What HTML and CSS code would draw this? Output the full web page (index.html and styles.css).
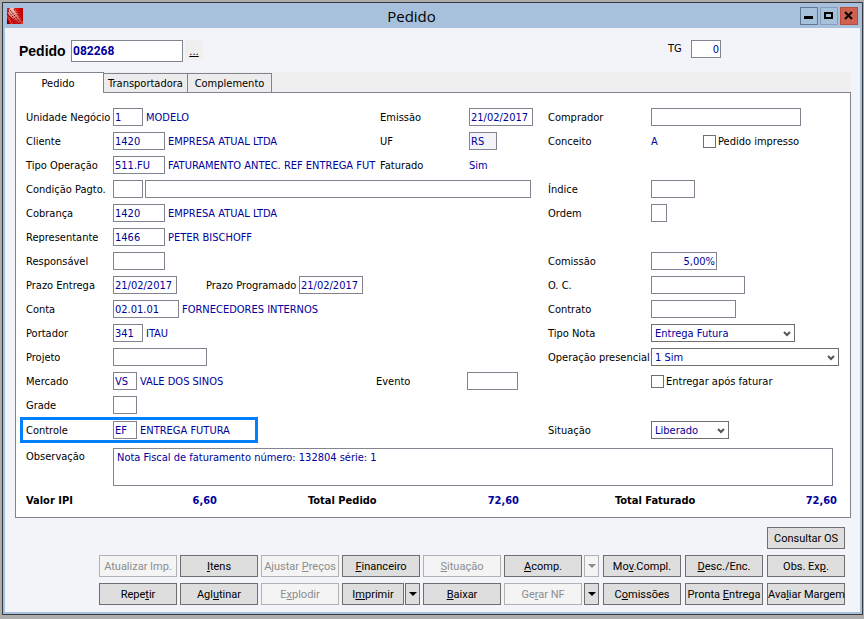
FILE: index.html
```html
<!DOCTYPE html>
<html lang="pt-BR">
<head>
    <meta charset="UTF-8">
    <meta name="viewport" content="width=device-width, initial-scale=1.0">
    <title>Pedido</title>
    <link rel="stylesheet" href="styles.css">
</head>
<body>
    <div class="window">
        <div class="titlebar">
            <svg class="logo" viewBox="0 0 16 16">
                <defs>
                    <linearGradient id="red" x1="0" y1="0" x2="1" y2="0">
                        <stop offset="0" stop-color="#c82020"/>
                        <stop offset="0.6" stop-color="#e60c0c"/>
                        <stop offset="1" stop-color="#b80000"/>
                    </linearGradient>
                    <linearGradient id="shine" x1="0" y1="0" x2="1" y2="1">
                        <stop offset="0" stop-color="#ffd8d0"/>
                        <stop offset="0.5" stop-color="#f08078"/>
                        <stop offset="1" stop-color="#e02020"/>
                    </linearGradient>
                </defs>
                <rect width="16" height="16" fill="url(#red)"/>
                <path d="M3 0h4l3 4 3 5 3 5v2h-3L8 12 3 8 1 5z" fill="url(#shine)"/>
                <path d="M0 6l4 4 4 6M1 3l5 6 6 7M3 2l5 6 6 8M7 1l4 6 4 6" stroke="#5c0808" stroke-dasharray="2 1" fill="none"/>
                <path d="M0 10l3 6H0z" fill="#6a0000"/>
                <path d="M1 9l4 7" stroke="#ff3028" fill="none"/>
            </svg>
            <h1>Pedido</h1>
            <button class="win-btn min" aria-label="Minimizar"><svg viewBox="0 0 16 16"><path d="M3 8h9v3H3z"/></svg></button>
            <button class="win-btn max" aria-label="Maximizar"><svg viewBox="0 0 16 16"><path d="M3 4h9v7H3zM5 6v3h5V6z" fill-rule="evenodd"/></svg></button>
            <button class="win-btn close" aria-label="Fechar"><svg viewBox="0 0 16 16"><path d="M4 4l7 7M11 4l-7 7" stroke="#000" stroke-width="2"/></svg></button>
        </div>

        <div class="content">
            <div class="top">
                <label for="pedido" class="pedido-label">Pedido</label>
                <input type="text" id="pedido" class="pedido-input" value="082268" autofocus>
                <button class="dots">...</button>
                <label for="tg" class="tg-label">TG</label>
                <input type="text" id="tg" class="w30 right" value="0">
            </div>

            <div class="tabs">
                <button class="tab active">Pedido</button>
                <button class="tab">Transportadora</button>
                <button class="tab">Complemento</button>
            </div>

            <div class="panel">
                <div class="row">
                    <div class="cell">
                        <label for="unidade">Unidade Negócio</label>
                        <input type="text" id="unidade" class="w30" value="1">
                        <span class="desc">MODELO</span>
                    </div>
                    <div class="cell mid">
                        <label for="emissao">Emissão</label>
                        <input type="text" id="emissao" class="w64" value="21/02/2017">
                    </div>
                    <div class="cell side">
                        <label for="comprador">Comprador</label>
                        <input type="text" id="comprador" class="w150">
                    </div>
                </div>

                <div class="row">
                    <div class="cell">
                        <label for="cliente">Cliente</label>
                        <input type="text" id="cliente" class="w52" value="1420">
                        <span class="desc">EMPRESA ATUAL LTDA</span>
                    </div>
                    <div class="cell mid">
                        <label for="uf">UF</label>
                        <input type="text" id="uf" class="w28 readonly" value="RS" readonly>
                    </div>
                    <div class="cell side">
                        <span class="name">Conceito</span>
                        <span class="value conceito">A</span>
                        <input type="checkbox" id="impresso">
                        <label for="impresso" class="check-label">Pedido impresso</label>
                    </div>
                </div>

                <div class="row">
                    <div class="cell">
                        <label for="tipoOperacao">Tipo Operação</label>
                        <input type="text" id="tipoOperacao" class="w52" value="511.FU">
                        <span class="desc">FATURAMENTO ANTEC. REF ENTREGA FUT</span>
                    </div>
                    <div class="cell mid">
                        <span class="name">Faturado</span>
                        <span class="value">Sim</span>
                    </div>
                </div>

                <div class="row">
                    <div class="cell wide">
                        <label for="condicao">Condição Pagto.</label>
                        <input type="text" id="condicao" class="w30">
                        <input type="text" class="condicao-desc" aria-label="Descrição da condição">
                    </div>
                    <div class="cell side">
                        <label for="indice">Índice</label>
                        <input type="text" id="indice" class="w44">
                    </div>
                </div>

                <div class="row">
                    <div class="cell wide">
                        <label for="cobranca">Cobrança</label>
                        <input type="text" id="cobranca" class="w52" value="1420">
                        <span class="desc">EMPRESA ATUAL LTDA</span>
                    </div>
                    <div class="cell side">
                        <label for="ordem">Ordem</label>
                        <input type="text" id="ordem" class="w16">
                    </div>
                </div>

                <div class="row">
                    <div class="cell wide">
                        <label for="representante">Representante</label>
                        <input type="text" id="representante" class="w52" value="1466">
                        <span class="desc">PETER BISCHOFF</span>
                    </div>
                </div>

                <div class="row">
                    <div class="cell wide">
                        <label for="responsavel">Responsável</label>
                        <input type="text" id="responsavel" class="w52">
                    </div>
                    <div class="cell side">
                        <label for="comissao">Comissão</label>
                        <input type="text" id="comissao" class="w66 right" value="5,00%">
                    </div>
                </div>

                <div class="row">
                    <div class="cell wide">
                        <label for="prazoEntrega">Prazo Entrega</label>
                        <input type="text" id="prazoEntrega" class="w64" value="21/02/2017">
                        <label for="prazoProgramado" class="prazo-label">Prazo Programado</label>
                        <input type="text" id="prazoProgramado" class="w64" value="21/02/2017">
                    </div>
                    <div class="cell side">
                        <label for="oc">O. C.</label>
                        <input type="text" id="oc" class="w94">
                    </div>
                </div>

                <div class="row">
                    <div class="cell wide">
                        <label for="conta">Conta</label>
                        <input type="text" id="conta" class="w66" value="02.01.01">
                        <span class="desc">FORNECEDORES INTERNOS</span>
                    </div>
                    <div class="cell side">
                        <label for="contrato">Contrato</label>
                        <input type="text" id="contrato" class="w85">
                    </div>
                </div>

                <div class="row">
                    <div class="cell wide">
                        <label for="portador">Portador</label>
                        <input type="text" id="portador" class="w30" value="341">
                        <span class="desc">ITAU</span>
                    </div>
                    <div class="cell side">
                        <label for="tipoNota">Tipo Nota</label>
                        <div class="combo w144">
                            <select id="tipoNota"><option>Entrega Futura</option></select>
                            <svg viewBox="0 0 8 6"><path d="M1 1l3 3 3-3" fill="none" stroke="#555" stroke-width="2"/></svg>
                        </div>
                    </div>
                </div>

                <div class="row">
                    <div class="cell wide">
                        <label for="projeto">Projeto</label>
                        <input type="text" id="projeto" class="w94">
                    </div>
                    <div class="cell side">
                        <label for="presencial">Operação presencial</label>
                        <div class="combo w188">
                            <select id="presencial"><option>1 Sim</option></select>
                            <svg viewBox="0 0 8 6"><path d="M1 1l3 3 3-3" fill="none" stroke="#555" stroke-width="2"/></svg>
                        </div>
                    </div>
                </div>

                <div class="row">
                    <div class="cell wide">
                        <label for="mercado">Mercado</label>
                        <input type="text" id="mercado" class="w24" value="VS">
                        <span class="desc">VALE DOS SINOS</span>
                        <label for="evento" class="evento-label">Evento</label>
                        <input type="text" id="evento" class="evento-input">
                    </div>
                    <div class="cell side">
                        <span class="name"></span>
                        <input type="checkbox" id="entregar">
                        <label for="entregar" class="check-label">Entregar após faturar</label>
                    </div>
                </div>

                <div class="row">
                    <div class="cell wide">
                        <label for="grade">Grade</label>
                        <input type="text" id="grade" class="w24">
                    </div>
                </div>

                <div class="row">
                    <div class="cell wide">
                        <div class="highlight">
                            <label for="controle">Controle</label>
                            <input type="text" id="controle" class="w24" value="EF">
                            <span class="desc">ENTREGA FUTURA</span>
                        </div>
                    </div>
                    <div class="cell side">
                        <label for="situacao">Situação</label>
                        <div class="combo w78">
                            <select id="situacao"><option>Liberado</option></select>
                            <svg viewBox="0 0 8 6"><path d="M1 1l3 3 3-3" fill="none" stroke="#555" stroke-width="2"/></svg>
                        </div>
                    </div>
                </div>

                <div class="obs">
                    <label for="observacao">Observação</label>
                    <textarea id="observacao">Nota Fiscal de faturamento número: 132804 série: 1</textarea>
                </div>

                <div class="totals">
                    <div class="total t1"><span>Valor IPI</span><b>6,60</b></div>
                    <div class="total t2"><span>Total Pedido</span><b>72,60</b></div>
                    <div class="total t3"><span>Total Faturado</span><b>72,60</b></div>
                </div>
            </div>

            <div class="actions">
                <div class="line">
                    <button class="btn">Consultar OS</button>
                </div>
                <div class="line">
                    <div class="group">
                        <button class="btn" disabled>Atualizar Imp.</button>
                        <button class="btn"><u>I</u>tens</button>
                        <button class="btn" disabled>Ajustar <u>P</u>reços</button>
                        <button class="btn"><u>F</u>inanceiro</button>
                        <button class="btn" disabled><u>S</u>ituação</button>
                        <div class="split">
                            <button class="btn"><u>A</u>comp.</button>
                            <button class="btn arrow" aria-label="Mais opções" disabled></button>
                        </div>
                    </div>
                    <button class="btn">Mo<u>v</u>.Compl.</button>
                    <button class="btn"><u>D</u>esc./Enc.</button>
                    <button class="btn">Obs. Ex<u>p</u>.</button>
                </div>
                <div class="line">
                    <div class="group">
                        <button class="btn">Repe<u>t</u>ir</button>
                        <button class="btn">Agl<u>u</u>tinar</button>
                        <button class="btn" disabled>E<u>x</u>plodir</button>
                        <div class="split tight">
                            <button class="btn">I<u>m</u>primir</button>
                            <button class="btn arrow" aria-label="Opções de impressão"></button>
                        </div>
                        <button class="btn"><u>B</u>aixar</button>
                        <div class="split">
                            <button class="btn" disabled>Ge<u>r</u>ar NF</button>
                            <button class="btn arrow" aria-label="Opções da nota"></button>
                        </div>
                    </div>
                    <button class="btn">C<u>o</u>missões</button>
                    <button class="btn">Pronta <u>E</u>ntrega</button>
                    <button class="btn">Ava<u>l</u>iar Margem</button>
                </div>
            </div>
        </div>
    </div>
</body>
</html>
```
FILE: styles.css
```css
* {
    box-sizing: border-box;
}

body {
    margin: 0;
    padding: 2px 1px 4px 2px;
    min-height: 100vh;
    display: flex;
    background-color: #adadad;
    font-family: "DejaVu Sans Condensed", Tahoma, sans-serif;
    font-size: 11px;
    color: #000;
}

button, input, select, textarea {
    font-family: inherit;
    font-size: 11px;
    margin: 0;
    border-radius: 0;
}

.window {
    flex: 1;
    display: flex;
    flex-direction: column;
    border: 1px solid #38393c;
    padding: 0 2px 2px;
    background-color: #a7c0dc;
}

/* Barra de titulo */
.titlebar {
    display: flex;
    align-items: center;
    gap: 2px;
    padding: 4px 2px 3px;
}

.logo {
    width: 16px;
    height: 16px;
}

.titlebar h1 {
    flex: 1;
    margin: 0;
    font-family: "Open Sans", sans-serif;
    font-size: 15px;
    font-weight: normal;
    line-height: 18px;
    text-align: center;
}

.win-btn {
    width: 18px;
    height: 18px;
    padding: 0;
    border: 1px solid #5f7695;
    background-color: #a7c0dc;
}

.win-btn svg {
    display: block;
    width: 16px;
    height: 16px;
}

.win-btn.max {
    border-color: #839fbd;
}

.win-btn.close {
    border-color: #b84c3c;
    background-color: #d0604f;
}

.content {
    flex: 1;
    padding: 12px 9px 6px 10px;
    background-color: #f3f4f9;
}

.top {
    display: flex;
    align-items: flex-start;
    height: 32px;
    padding-left: 4px;
}

.pedido-label {
    width: 52px;
    font-family: "Liberation Sans", Arial, sans-serif;
    font-size: 14px;
    font-weight: bold;
    line-height: 22px;
}

input[type="text"] {
    height: 18px;
    padding: 0 1px;
    border: 1px solid #82858f;
    background-color: #fff;
    color: #00009c;
    outline: none;
}

input.pedido-input {
    width: 112px;
    height: 22px;
    font-family: Roboto, sans-serif;
    font-size: 12px;
    font-weight: bold;
    caret-color: #000;
}

.dots {
    width: 18px;
    height: 20px;
    margin-left: 2px;
    padding: 2px 0 0;
    border: none;
    background-color: #efefef;
    color: #000;
    text-decoration: underline;
}

.tg-label {
    margin-left: auto;
    width: 23px;
    line-height: 18px;
}

.top .w30 {
    margin-right: 130px;
}

/* Abas */
.tabs {
    display: flex;
    align-items: flex-end;
    height: 20px;
    background-color: #efefef;
}

.tab {
    height: 19px;
    padding: 0;
    border: 1px solid #82838f;
    border-left: none;
    border-bottom: none;
    background-color: #ececec;
    color: #000;
    width: 84px;
    white-space: nowrap;
}

.tab.active {
    position: relative;
    width: 89px;
    height: 21px;
    margin-bottom: -1px;
    padding-right: 3px;
    border-left: 1px solid #82838f;
    background-color: #fff;
}

.panel {
    border: 1px solid #82838f;
    padding: 12px 0 4px 10px;
    background-color: #fff;
}

.row {
    display: grid;
    grid-template-columns: 354fr 168fr 302fr;
    min-height: 24px;
}

.cell {
    display: flex;
    align-items: center;
    min-width: 0;
    white-space: nowrap;
}

.cell.wide {
    grid-column: 1 / 3;
}

.cell label, .name {
    flex: none;
    width: 87px;
}

.cell.mid label, .mid .name {
    width: 89px;
}

.cell.side label, .side .name {
    width: 103px;
}

.cell input, .combo {
    flex: none;
}

.desc {
    margin: 0 4px 0 3px;
    color: #00009c;
}

.value {
    color: #00009c;
}

.conceito {
    width: 52px;
}

.cell label.check-label {
    width: auto;
    margin-left: 2px;
}

.cell label.prazo-label {
    width: 93px;
    margin-left: 29px;
}

.cell input.condicao-desc {
    flex: 1;
    margin: 0 17px 0 2px;
}

.cell label.evento-label {
    width: 91px;
    margin-left: auto;
}

.cell input.evento-input {
    width: 51px;
    margin-right: 30px;
}

input[type="checkbox"] {
    appearance: none;
    width: 13px;
    height: 13px;
    border: 1px solid #6f6f6f;
    background-color: #fff;
}

input.readonly {
    background-color: #f3f4f9;
}

input.right {
    text-align: right;
}

.w16 { width: 16px; }
.w24 { width: 24px; }
.w28 { width: 28px; }
.w30 { width: 30px; }
.w44 { width: 44px; }
.w52 { width: 52px; }
.w64 { width: 64px; }
.w66 { width: 66px; }
.w78 { width: 78px; }
.w85 { width: 85px; }
.w94 { width: 94px; }
.w144 { width: 144px; }
.w150 { width: 150px; }
.w188 { width: 188px; }

.combo {
    position: relative;
}

.combo select {
    display: block;
    appearance: none;
    width: 100%;
    height: 18px;
    padding: 0 3px;
    border: 1px solid #6f6f6f;
    background-color: #fff;
    color: #00009c;
}

.combo svg {
    position: absolute;
    right: 4px;
    top: 7px;
    width: 8px;
    height: 6px;
    pointer-events: none;
}

.highlight {
    display: flex;
    align-items: center;
    width: 238px;
    height: 26px;
    margin-left: -6px;
    padding-left: 3px;
    border: 3px solid #0080ff;
}

.obs {
    display: flex;
    margin-top: 5px;
    padding-right: 17px;
}

.obs label {
    width: 87px;
    line-height: 18px;
}

.obs textarea {
    flex: 1;
    height: 38px;
    padding: 2px 3px;
    border: 1px solid #82858f;
    resize: none;
    color: #00009c;
}

.totals {
    display: grid;
    grid-template-columns: 282fr 307fr 235fr;
    margin-top: 3px;
    line-height: 24px;
    font-weight: bold;
}

.total {
    display: flex;
    justify-content: space-between;
}

.total b {
    color: #00009c;
}

.t1 { width: 191px; }
.t2 { width: 211px; }
.t3 { width: 222px; }

/* Botoes */
.actions {
    display: flex;
    flex-direction: column;
    gap: 6px;
    margin-top: 9px;
    padding-right: 6px;
}

.line {
    display: flex;
    justify-content: flex-end;
    gap: 4px;
}

.group {
    display: flex;
    gap: 3px;
}

.btn {
    width: 78px;
    height: 22px;
    padding: 0;
    border: 1px solid #6f6f6f;
    background-color: #dedede;
    color: #000;
    font-family: Roboto, sans-serif;
    font-size: 11px;
    white-space: nowrap;
}

.btn:disabled {
    border-color: #b0b3b6;
    background-color: #f4f4f4;
    color: #8c8c8c;
}

.split {
    display: flex;
    gap: 2px;
}

.split.tight {
    gap: 1px;
}

.split.tight .btn {
    width: 62px;
}

.split .btn.arrow {
    display: flex;
    align-items: center;
    justify-content: center;
    width: 15px;
}

.arrow::before {
    content: "";
    border: 4px solid transparent;
    border-top-color: currentColor;
    border-bottom: none;
}
```
